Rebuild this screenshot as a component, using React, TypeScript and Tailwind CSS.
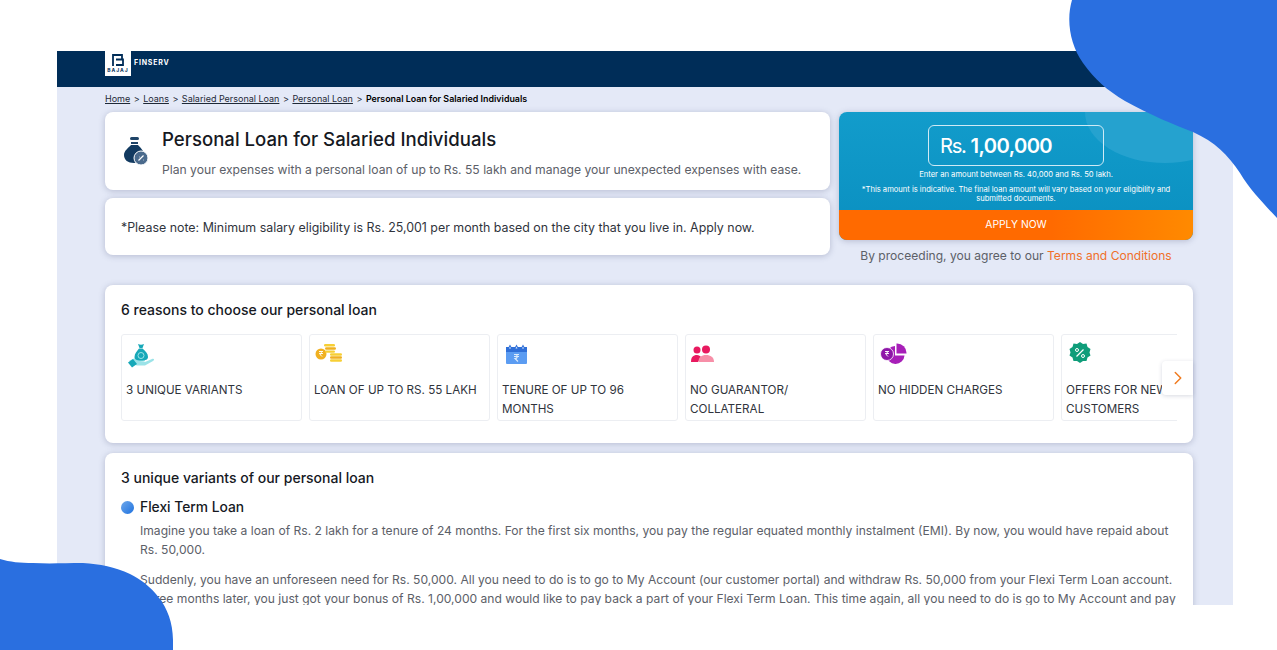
import React from 'react';
import { ChevronRight } from 'lucide-react';

const font = "font-['Inter','Liberation_Sans',sans-serif]";

const HandBag = () => (
  <svg width="28" height="25" viewBox="0 0 28 25">
    <path d="M1 18c3-2 6-3 9-3l5 1c2 0 3 2 1 2.500h-4l5 .500 7-3c2-1 3 1 1 2l-8 4.500h-8l-3-1z" fill="#9be3e8" />
    <path d="M10 1c2 1 4 1 6 0l-1.500 4h-3z" fill="#17a8b8" />
    <path d="M11 5.500h3.500c3 2.500 5.500 5 5.500 8.500 0 2.500-2 3.500-7 3.500s-6.500-1.500-6.500-3.500c0-3.500 2.500-6 4.500-8.500z" fill="#17a8b8" />
    <circle cx="13" cy="12.500" r="3" fill="none" stroke="#9be3e8" strokeWidth="1" />
    <path d="M0 19.500l5-3.500 4 5-5 3.500z" fill="#17a8b8" />
  </svg>
);

const Coins = () => (
  <svg width="28" height="18" viewBox="0 0 28 18">
    <circle cx="6" cy="10" r="5.500" fill="#f0b020" />
    <path d="M4 7.500h4M4 9.500h4M5 7.500c2 0 2 3 0 3l2 2" stroke="#fff" strokeWidth="0.900" fill="none" />
    <rect x="9" y="0" width="11" height="2.600" rx="1.300" fill="#f7cf35" />
    <rect x="10" y="3.200" width="11" height="2.600" rx="1.300" fill="#f0b020" />
    <rect x="10" y="6.400" width="10" height="2.400" rx="1.200" fill="#f7cf35" />
    <rect x="15" y="9.300" width="12" height="2.500" rx="1.200" fill="#f7cf35" />
    <rect x="15" y="12.300" width="12" height="2.500" rx="1.200" fill="#f0b020" />
    <rect x="15" y="15.300" width="12" height="2.500" rx="1.200" fill="#f7cf35" />
  </svg>
);

const Calendar = () => (
  <svg width="21" height="20" viewBox="0 0 21 20">
    <rect x="0" y="3" width="21" height="17" rx="1" fill="#5b9cf2" />
    <rect x="0" y="3" width="21" height="5" fill="#2f6fd8" />
    <path d="M1.500 5l2.500-4.500L6.500 5zM8 5l2.500-4.500L13 5zM14.500 5L17 .500 19.500 5z" fill="#2f6fd8" />
    <path d="M3 4.500l1-2 1 2zM9.500 4.500l1-2 1 2zM16 4.500l1-2 1 2z" fill="#dcebfb" />
    <path d="M8 10.500h5M8 12.500h5M9 10.500c3 0 3 4 0 4l3 3" stroke="#dcebfb" strokeWidth="1.100" fill="none" />
  </svg>
);

const People = () => (
  <svg width="23" height="18" viewBox="0 0 23 18">
    <circle cx="6" cy="5" r="3.500" fill="#e8195f" />
    <path d="M0 17c0-5 2-7 6-7 2 0 3 1 4 2l-3 5z" fill="#e8195f" />
    <circle cx="15" cy="4.500" r="4" fill="#e8195f" />
    <path d="M7.500 17c0-5 3-7 7.500-7s8 2 8 7z" fill="#f78fa8" />
  </svg>
);

const PieCoin = () => (
  <svg width="27" height="21" viewBox="0 0 27 21">
    <path d="M15 3a9 9 0 1 0 9.500 9.500H15z" fill="#a71fb8" />
    <path d="M16.500 .500a9.500 9.500 0 0 1 10 10h-10z" fill="#a71fb8" />
    <circle cx="7" cy="11" r="6.500" fill="#8e15a8" stroke="#fff" strokeWidth="0.800" />
    <path d="M5 8.500h4M5 10.500h4M6 8.500c2 0 2 3 0 3l2 2" stroke="#fff" strokeWidth="0.900" fill="none" />
  </svg>
);

const Offer = () => (
  <svg width="22" height="22" viewBox="0 0 22 22">
    <path d="M11 0l3 2 3.500-.500 1 3.500 3 2-1 3.500 1 3-3 2-1 3.500-3.500 0-3 2-3-2-3.500 0-1-3.500-3-2 1-3-1-3.500 3-2 1-3.500L8 2z" fill="#0f9d7a" />
    <path d="M7.500 14.500l7-7" stroke="#fff" strokeWidth="1.200" />
    <circle cx="8" cy="8" r="1.500" fill="none" stroke="#fff" strokeWidth="1" />
    <circle cx="14" cy="14" r="1.500" fill="none" stroke="#fff" strokeWidth="1" />
  </svg>
);

const reasons = [
  { icon: <HandBag />, label: '3 UNIQUE VARIANTS', pad: 'pl-[2px] pt-[8px]' },
  { icon: <Coins />, label: 'LOAN OF UP TO RS. 55 LAKH', pad: 'pl-[1px] pt-[9px]' },
  { icon: <Calendar />, label: 'TENURE OF UP TO 96 MONTHS', pad: 'pl-[4px] pt-[9px]' },
  { icon: <People />, label: 'NO GUARANTOR/ COLLATERAL', pad: 'pl-[1px] pt-[10px]' },
  { icon: <PieCoin />, label: 'NO HIDDEN CHARGES', pad: 'pl-[2px] pt-[8px]' },
  { icon: <Offer />, label: 'OFFERS FOR NEW CUSTOMERS', pad: 'pl-[3px] pt-[7px]' },
];

const crumbs = ['Home', 'Loans', 'Salaried Personal Loan', 'Personal Loan'];

const card = 'bg-white rounded-lg shadow-[0_1px_6px_rgba(60,70,110,0.28)]';

export default function App() {
  return (
    <div className={`relative w-[1277px] h-[650px] overflow-hidden bg-white ${font}`}>
      <div className="ml-[57px] mt-[51px] w-[1176px] h-[554px] overflow-hidden bg-[#e4e9f7]">
        <div className="h-9 bg-[#002d58] pl-12 flex items-start">
          <div className="w-[26px] h-[25px] bg-white flex flex-col items-center text-[#002d58] leading-none">
            <svg className="mt-[3px]" width="14" height="12" viewBox="0 0 14 12" fill="none" stroke="#002d58" strokeWidth="1.800">
              <path d="M2 12V1h9v4.500H5M5 5.500h7v5.500H5" />
            </svg>
            <span className="text-[5px] font-bold tracking-[1px] leading-[7px] mt-[1px]">BAJAJ</span>
          </div>
          <span className="ml-[3px] mt-[8px] text-[7px] font-bold text-white tracking-[0.8px] leading-[8px]">FINSERV</span>
        </div>

        <div className="pl-12 pr-10">
          <div className="h-[25px] pb-[1px] flex items-center gap-[3.500px] text-[9px] text-[#1f2937] whitespace-nowrap">
            {crumbs.map((c) => (
              <React.Fragment key={c}>
                <span className="underline">{c}</span>
                <span>&gt;</span>
              </React.Fragment>
            ))}
            <span className="text-[8.900px] font-semibold text-black">Personal Loan for Salaried Individuals</span>
          </div>

          <div className="flex gap-[9px]">
            <div className="w-[725px] flex flex-col gap-2">
              <div className={`${card} h-[78px] flex items-center pl-[18px]`}>
                <svg width="25" height="30" viewBox="0 0 25 30">
                  <rect x="7" y="1" width="9" height="3" rx="1.500" fill="#1f4468" />
                  <rect x="8" y="6" width="7" height="2" fill="#1f4468" />
                  <path d="M8 9h7c3 3 6 6 6 10 0 5-4 8-10 8-6 0-10-3-10-8 0-4 4-7 7-10z" fill="#123a60" />
                  <circle cx="18" cy="22" r="7" fill="#4a6a8c" stroke="#fff" strokeWidth="1" />
                  <path d="M15.500 24.500l5-5M16 21h.500M20 24h.500" stroke="#fff" strokeWidth="1.200" />
                </svg>
                <div className="ml-[14px] mt-[4px]">
                  <h1 className="text-[18.600px] leading-6 font-medium text-[#16191f] whitespace-nowrap">Personal Loan for Salaried Individuals</h1>
                  <p className="mt-[10px] text-[12.150px] leading-[18px] text-[#5c6068] whitespace-nowrap">
                    Plan your expenses with a personal loan of up to Rs. 55 lakh and manage your unexpected expenses with ease.
                  </p>
                </div>
              </div>
              <div className={`${card} h-[57px] pt-[3px] flex items-center pl-4 text-[12.400px] text-[#30343c] whitespace-nowrap`}>
                *Please note: Minimum salary eligibility is Rs. 25,001 per month based on the city that you live in. Apply now.
              </div>
            </div>

            <div className="w-[354px]">
              <div className="relative h-[128px] rounded-lg overflow-hidden shadow-[0_1px_6px_rgba(60,70,110,0.28)] bg-[linear-gradient(180deg,#129ccb_0%,#0a8fc0_100%)] flex flex-col">
                <div className="absolute left-[246px] top-[-50px] w-[160px] h-[101px] rounded-[50%] bg-[#25a2cf]" />
                <div className="relative flex-1 flex flex-col items-center text-white">
                  <div className="mt-[13px] w-[176px] h-[41px] pt-[1px] border border-[#cfeaf5] rounded-md flex items-center pl-[11px] text-[20.200px] leading-none whitespace-nowrap">
                    <span className="tracking-[-1.300px]">Rs.</span>
                    <span className="ml-[5px] font-semibold tracking-[-0.6px]">1,00,000</span>
                  </div>
                  <p className="mt-[4px] text-[7.650px] leading-[10px]">Enter an amount between Rs. 40,000 and Rs. 50 lakh.</p>
                  <p className="mt-[5px] w-[320px] text-center text-[7.580px] leading-[9px]">
                    *This amount is indicative. The final loan amount will vary based on your eligibility and submitted documents.
                  </p>
                </div>
                <div className="relative h-[30px] bg-[linear-gradient(90deg,#ff6a00_0%,#ff6a00_60%,#ff8a00_100%)] flex items-center justify-center text-[10.300px] text-white">
                  APPLY NOW
                </div>
              </div>
              <p className="mt-[8px] text-center text-[12.070px] leading-[16px] text-[#5c6068] whitespace-nowrap">
                By proceeding, you agree to our <span className="text-[#f0702a]">Terms and Conditions</span>
              </p>
            </div>
          </div>

          <div className={`${card} relative mt-[21px] h-[158px] px-4 pt-[15px]`}>
            <h2 className="text-[14px] leading-5 font-medium text-[#16191f]">6 reasons to choose our personal loan</h2>
            <div className="mt-[14px] flex gap-[7px] overflow-hidden">
              {reasons.map((r) => (
                <div key={r.label} className="shrink-0 w-[181px] h-[87px] rounded-[3px] border border-[#eceef2] px-[4px] text-[11.650px] leading-[19px] text-[#30343c]">
                  <div className={`h-[46px] flex items-start ${r.pad}`}>{r.icon}</div>
                  <div>{r.label}</div>
                </div>
              ))}
            </div>
            <div className="absolute right-0 top-[76px] w-[31px] h-[34px] bg-white rounded-l shadow-[0_1px_4px_rgba(60,70,110,0.2)] flex items-center justify-center">
              <ChevronRight size={22} strokeWidth={1.600} className="text-[#f07a1e]" />
            </div>
          </div>

          <div className={`${card} mt-[10px] h-[200px] px-4 pt-[15px]`}>
            <h2 className="text-[14px] leading-5 font-medium text-[#16191f]">3 unique variants of our personal loan</h2>
            <div className="mt-[9px] flex items-center gap-[6px]">
              <span className="w-[13px] h-[13px] rounded-full bg-[linear-gradient(135deg,#6fa8ea,#1f72e0)]" />
              <h3 className="text-[13.800px] leading-[20px] text-[#16191f] font-medium">Flexi Term Loan</h3>
            </div>
            <div className="pl-[19px] text-[12.100px] leading-[19px] text-[#5c6068]">
              <p className="mt-[4px]">
                Imagine you take a loan of Rs. 2 lakh for a tenure of 24 months. For the first six months, you pay the regular equated monthly instalment (EMI). By now, you would have repaid about Rs. 50,000.
              </p>
              <p className="mt-[11px]">
                Suddenly, you have an unforeseen need for Rs. 50,000. All you need to do is to go to My Account (our customer portal) and withdraw Rs. 50,000 from your Flexi Term Loan account. Three months later, you just got your bonus of Rs. 1,00,000 and would like to pay back a part of your Flexi Term Loan. This time again, all you need to do is go to My Account and pay
              </p>
            </div>
          </div>
        </div>
      </div>

      <svg className="absolute inset-0 pointer-events-none" width="1277" height="650" viewBox="0 0 1277 650">
        <path d="M1072 0C1066 20 1070 45 1083 63C1095 80 1107 90 1125 101C1150 115 1175 125 1193 132C1215 142 1228 155 1240 173C1250 190 1265 205 1277 218L1277 0Z" fill="#2a6fe0" />
        <path d="M0 559C10 562 20 563 33 563C50 564 65 563 83 563C100 564 115 567 130 574C150 584 173 605 173 640L173 650L0 650Z" fill="#2a6fe0" />
      </svg>
    </div>
  );
}
